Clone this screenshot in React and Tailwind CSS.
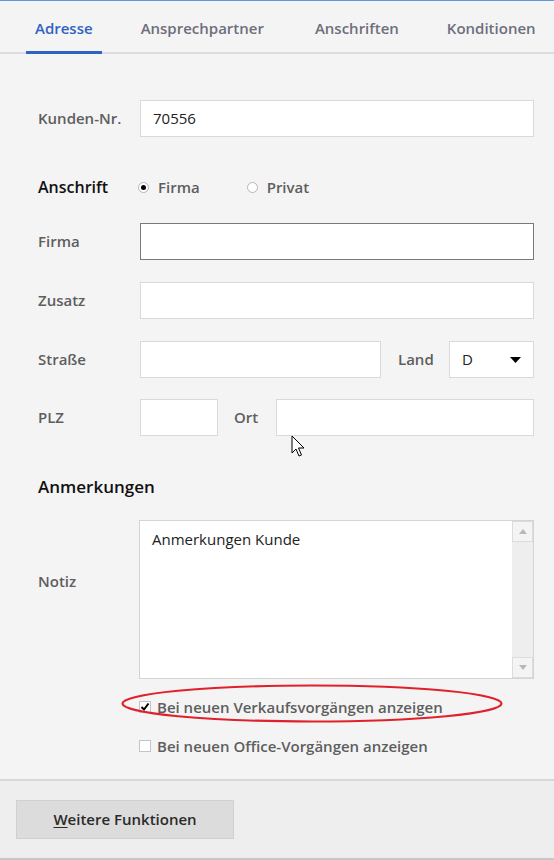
const tabs = ['Adresse', 'Ansprechpartner', 'Anschriften', 'Konditionen']
const tabGap = ['mr-[30px]', 'mr-[33px]', 'mr-[30px]', '']

function Field({ className = '', children, focused }) {
  return (
    <div
      className={`h-[37px] bg-white border flex items-center px-3 text-[15px] text-[#222] ${
        focused ? 'border-[#7a7a7a]' : 'border-[#d9d9d9]'
      } ${className}`}
    >
      {children}
    </div>
  )
}

function Label({ children, className = '' }) {
  return <div className={`text-[15px] font-semibold text-[#5e5e5e] ${className}`}>{children}</div>
}

function Radio({ checked, label }) {
  return (
    <div className="flex items-center gap-[9px]">
      <span className="w-[11px] h-[11px] rounded-full border border-[#b5b5b5] bg-white flex items-center justify-center">
        {checked && <span className="w-[5px] h-[5px] rounded-full bg-black" />}
      </span>
      <span className="text-[15px] text-[#5e5e5e] font-semibold">{label}</span>
    </div>
  )
}

function Check({ checked, label }) {
  return (
    <div className="flex items-center gap-[6px]">
      <span className="w-[12px] h-[12px] border border-[#c4c4c4] bg-white flex items-center justify-center">
        {checked && (
          <svg width="10" height="10" viewBox="0 0 10 10">
            <path d="M1.5 5 L4 7.5 L8.5 1.5" fill="none" stroke="#000" strokeWidth="2" />
          </svg>
        )}
      </span>
      <span className="text-[15px] text-[#5e5e5e] font-semibold">{label}</span>
    </div>
  )
}

function Cursor() {
  return (
    <svg className="absolute left-[291px] top-[434px]" width="16" height="24" viewBox="0 0 16 24">
      <path
        d="M1 1 L1 18 L5 14 L8 21 L10.5 20 L7.5 13 L13 13 Z"
        fill="#fff"
        stroke="#000"
        strokeWidth="1"
        strokeLinejoin="round"
      />
    </svg>
  )
}

export default function App() {
  return (
    <div className="relative w-[554px] h-[860px] bg-[#f4f4f4] flex flex-col border-t border-[#5a9bdc] font-['Open_Sans',sans-serif]">
      {/* Reiter */}
      <div className="h-[53px] shrink-0 border-b-2 border-[#dcdcdc] flex items-end pl-[26px]">
        {tabs.map((t, i) => (
          <div
            key={t}
            className={`px-[9px] pb-[12px] text-[15px] font-semibold -mb-[2px] border-b-[3px] ${
              i === 0 ? 'text-[#2f63c2] border-[#2f63c2]' : 'text-[#6e6e7c] border-transparent'
            } ${tabGap[i]}`}
          >
            {t}
          </div>
        ))}
      </div>

      {/* Formular */}
      <div className="flex-1 pl-[38px] pr-[20px] pt-[46px] flex flex-col">
        <div className="flex items-center">
          <Label className="w-[102px]">Kunden-Nr.</Label>
          <Field className="flex-1">70556</Field>
        </div>

        <div className="flex items-center mt-[38px]">
          <div className="w-[100px] text-[16px] font-semibold text-[#111]">Anschrift</div>
          <div className="flex items-center gap-[47px]">
            <Radio checked label="Firma" />
            <Radio label="Privat" />
          </div>
        </div>

        <div className="flex items-center mt-[24px]">
          <Label className="w-[102px]">Firma</Label>
          <Field className="flex-1" focused />
        </div>

        <div className="flex items-center mt-[22px]">
          <Label className="w-[102px]">Zusatz</Label>
          <Field className="flex-1" />
        </div>

        <div className="flex items-center mt-[22px]">
          <Label className="w-[102px]">Straße</Label>
          <Field className="w-[241px]" />
          <Label className="ml-[17px] w-[51px]">Land</Label>
          <Field className="flex-1 justify-between">
            <span>D</span>
            <svg width="11" height="6" viewBox="0 0 11 6">
              <path d="M0 0 H11 L5.5 6 Z" fill="#000" />
            </svg>
          </Field>
        </div>

        <div className="flex items-center mt-[21px]">
          <Label className="w-[102px]">PLZ</Label>
          <Field className="w-[78px]" />
          <Label className="ml-[16px] w-[42px]">Ort</Label>
          <Field className="flex-1" />
        </div>

        <div className="mt-[38px] text-[17px] font-semibold text-[#111]">Anmerkungen</div>

        <div className="flex items-start mt-[20px]">
          <Label className="w-[101px] pt-[50px]">Notiz</Label>
          <div className="flex-1 h-[159px] bg-white border border-[#d4d4d4] flex">
            <div className="flex-1 px-3 pt-[7px] text-[15px] text-[#222]">Anmerkungen Kunde</div>
            <div className="w-[21px] flex flex-col bg-[#f2f2f2]">
              <div className="h-[21px] bg-[#f4f4f4] border border-[#dcdcdc] flex items-center justify-center">
                <svg width="8" height="5" viewBox="0 0 8 5">
                  <path d="M0 5 L4 0 L8 5 Z" fill="#b8b8b8" />
                </svg>
              </div>
              <div className="flex-1 bg-[#eeeeee]" />
              <div className="h-[21px] bg-[#f4f4f4] border border-[#dcdcdc] flex items-center justify-center">
                <svg width="8" height="5" viewBox="0 0 8 5">
                  <path d="M0 0 L8 0 L4 5 Z" fill="#b8b8b8" />
                </svg>
              </div>
            </div>
          </div>
        </div>

        <div className="relative ml-[101px] mt-[17px]">
          <Check checked label="Bei neuen Verkaufsvorgängen anzeigen" />
          <svg className="absolute -left-[18px] -top-[12px]" width="382" height="39" viewBox="0 0 382 39">
            <ellipse cx="191" cy="19.5" rx="189.5" ry="18" fill="none" stroke="#e0212b" strokeWidth="2.2" />
          </svg>
        </div>

        <div className="ml-[101px] mt-[17px]">
          <Check label="Bei neuen Office-Vorgängen anzeigen" />
        </div>
      </div>

      {/* Fußleiste */}
      <div className="h-[81px] shrink-0 border-t-2 border-[#d8d8d8] border-b-2 border-b-[#c6c6c6] bg-[#eeeeee] px-4 pt-[19px]">
        <button className="w-[218px] h-[39px] bg-[#dcdcdc] border border-[#d0d0d0] text-[15px] font-semibold text-[#2a2a2a]">
          <span className="underline underline-offset-2">W</span>eitere Funktionen
        </button>
      </div>

      <Cursor />
    </div>
  )
}
